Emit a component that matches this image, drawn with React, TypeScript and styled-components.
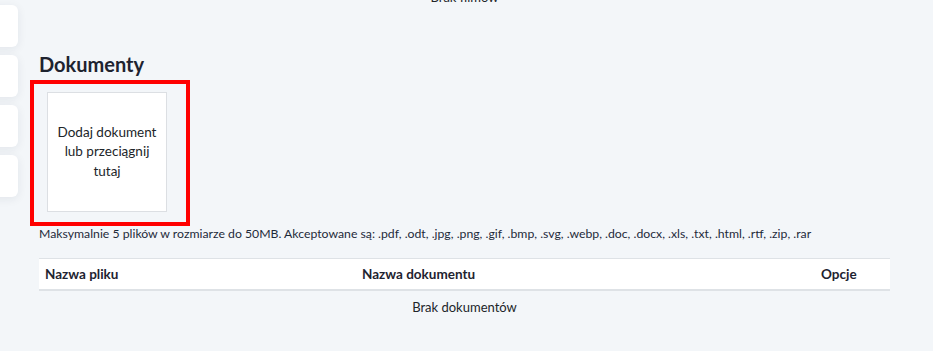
import React from 'react'
import styled, { createGlobalStyle } from 'styled-components'

const GlobalStyle = createGlobalStyle`
  html, body {
    margin: 0;
    padding: 0;
    background: #f3f6f9;
    overflow: hidden;
  }
  body {
    font-family: Lato, 'Noto Sans', sans-serif;
    color: #212529;
  }
`

const Layout = styled.div`
  display: flex;
  gap: 21px;
  width: 933px;
  height: 351px;
  overflow: hidden;
`

const Sidebar = styled.div`
  flex: 0 0 18px;
  display: flex;
  flex-direction: column;
  gap: 8px;
  padding-top: 5px;
`

const SideCard = styled.div`
  width: 60px;
  height: 42px;
  margin-left: -42px;
  background: #ffffff;
  border-radius: 6px;
  box-shadow: 0 2px 10px rgba(30, 40, 60, 0.08);
`

const Main = styled.div`
  width: 851px;
  display: flex;
  flex-direction: column;
`

const EmptyText = styled.div<{ $top?: number }>`
  text-align: center;
  font-size: 13px;
  line-height: 20px;
  margin-top: ${p => p.$top ?? 0}px;
`

const Heading = styled.h2`
  margin: 45px 0 16px;
  font-size: 20px;
  line-height: 24px;
  font-weight: 700;
  color: #1e2330;
`

const DropArea = styled.div`
  position: relative;
  margin-left: 8px;
  width: 120px;
  height: 120px;
`

const DropZone = styled.div`
  box-sizing: border-box;
  width: 120px;
  height: 120px;
  background: #ffffff;
  border: 1px solid #dcdfe3;
  display: flex;
  align-items: center;
  justify-content: center;
  text-align: center;
  font-size: 13.5px;
  line-height: 19.5px;
  padding: 0 4px;
  cursor: pointer;
`

const Highlight = styled.div`
  position: absolute;
  left: -17px;
  top: -12px;
  width: 160px;
  height: 146px;
  box-sizing: border-box;
  border: 4px solid #ff0000;
  pointer-events: none;
`

const Note = styled.div`
  margin-top: 14px;
  font-size: 12.25px;
  line-height: 16px;
  color: #1e2a3a;
`

const Table = styled.div`
  margin-top: 16px;
`

const HeaderRow = styled.div`
  display: grid;
  grid-template-columns: 317px 1fr 75px;
  background: #ffffff;
  border-top: 1px solid #dee2e6;
  border-bottom: 2px solid #dee2e6;
  height: 30px;
  align-items: center;
`

const HeaderCell = styled.div`
  padding: 0 6px;
  font-size: 13.5px;
  font-weight: 700;
  color: #1e2330;
`

export default function App() {
  return (
    <>
      <GlobalStyle />
      <Layout>
        <Sidebar>
          <SideCard />
          <SideCard />
          <SideCard />
          <SideCard />
        </Sidebar>
        <Main>
          <EmptyText $top={-13}>Brak filmów</EmptyText>
          <Heading>Dokumenty</Heading>
          <DropArea>
            <DropZone>Dodaj dokument lub przeciągnij tutaj</DropZone>
            <Highlight />
          </DropArea>
          <Note>
            Maksymalnie 5 plików w rozmiarze do 50MB. Akceptowane są: .pdf, .odt, .jpg, .png, .gif, .bmp, .svg, .webp, .doc, .docx, .xls, .txt, .html, .rtf, .zip, .rar
          </Note>
          <Table>
            <HeaderRow>
              <HeaderCell>Nazwa pliku</HeaderCell>
              <HeaderCell>Nazwa dokumentu</HeaderCell>
              <HeaderCell>Opcje</HeaderCell>
            </HeaderRow>
            <EmptyText $top={6}>Brak dokumentów</EmptyText>
          </Table>
        </Main>
      </Layout>
    </>
  )
}
